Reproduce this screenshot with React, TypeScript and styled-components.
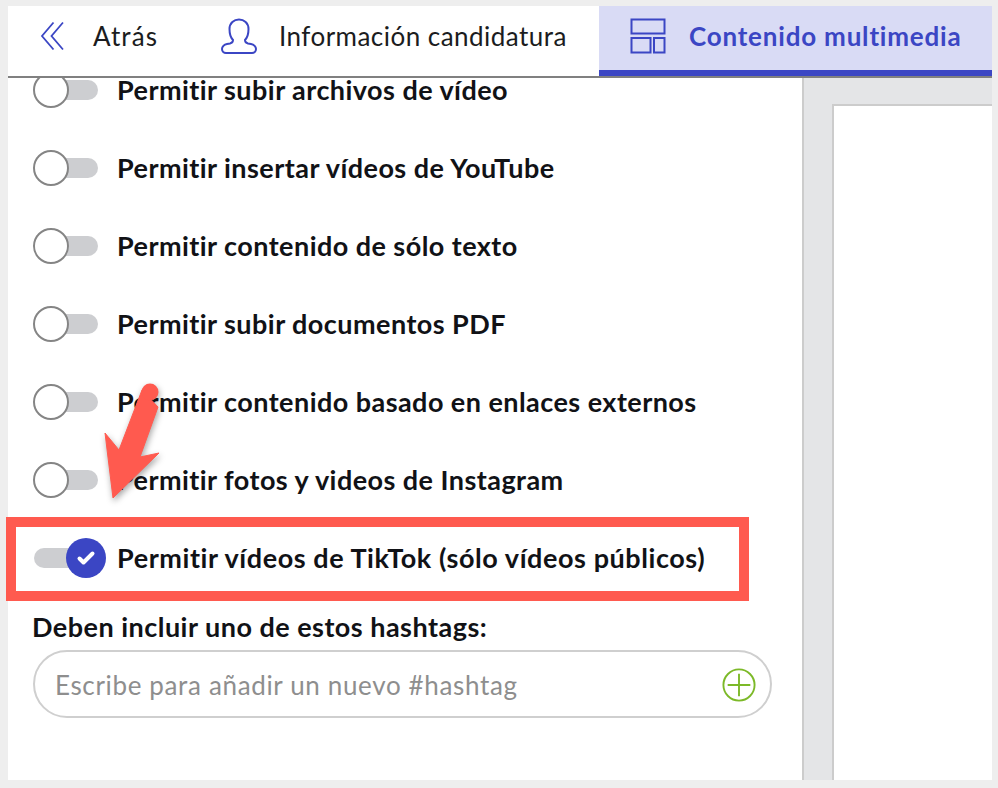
import React from 'react'
import styled, { createGlobalStyle } from 'styled-components'

const BLUE = '#3b46c4'
const CORAL = '#ff5a4f'

const GlobalStyle = createGlobalStyle`
  html, body {
    margin: 0;
    padding: 0;
    background: #eeeeee;
  }
  * {
    box-sizing: border-box;
  }
`

const Page = styled.div`
  position: relative;
  width: 998px;
  height: 788px;
  padding: 6px 6px 8px 8px;
  overflow: hidden;
  font-family: Lato, 'Noto Sans', sans-serif;
  color: #111216;
`

const Frame = styled.div`
  display: flex;
  flex-direction: column;
  height: 100%;
  background: #fff;
`

const TabBar = styled.nav`
  display: flex;
  flex: none;
  height: 72px;
  border-bottom: 2px solid #808080;
`

const Tab = styled.div<{ $active?: boolean; $width: number; $pad: number; $gap: number; $spacing: number }>`
  display: flex;
  align-items: center;
  width: ${({ $width }) => $width}px;
  flex: ${({ $active }) => ($active ? 1 : 'none')};
  height: 70px;
  padding-left: ${({ $pad }) => $pad}px;
  padding-bottom: ${({ $active }) => ($active ? '4px' : '10px')};
  gap: ${({ $gap }) => $gap}px;
  font-size: 26px;
  font-weight: ${({ $active }) => ($active ? 700 : 400)};
  letter-spacing: ${({ $spacing }) => $spacing}px;
  color: ${({ $active }) => ($active ? BLUE : '#1b1c20')};
  background: ${({ $active }) => ($active ? '#d9dbf5' : 'transparent')};
  border-bottom: ${({ $active }) => ($active ? `6px solid ${BLUE}` : 'none')};
`

const Body = styled.div`
  display: flex;
  flex: 1;
  min-height: 0;
`

const Settings = styled.section`
  width: 796px;
  flex: none;
  overflow: hidden;
  border-right: 2px solid #cccccc;
`

const OptionList = styled.ul`
  list-style: none;
  margin: -27px 0 0;
  padding: 0;
`

const Option = styled.li`
  display: flex;
  align-items: center;
  gap: 20px;
  height: 78px;
  padding-left: 25px;
  font-size: 27px;
  font-weight: 700;
  line-height: 22px;
`

const OptionLabel = styled.span<{ $on?: boolean }>`
  letter-spacing: ${({ $on }) => ($on ? '0.57px' : '0.45px')};
`

const Toggle = styled.span`
  position: relative;
  display: block;
  flex: none;
  width: 64px;
  height: 20px;
  margin-left: 1px;
  margin-right: -1px;
  border-radius: 10px;
  background: #cdced1;
`

const Knob = styled.span<{ $on?: boolean }>`
  position: absolute;
  top: ${({ $on }) => ($on ? '-10px' : '-8px')};
  left: ${({ $on }) => ($on ? '32px' : '-1px')};
  display: flex;
  align-items: center;
  justify-content: center;
  width: ${({ $on }) => ($on ? '40px' : '36px')};
  height: ${({ $on }) => ($on ? '40px' : '36px')};
  border-radius: 50%;
  background: ${({ $on }) => ($on ? BLUE : '#fff')};
  border: ${({ $on }) => ($on ? 'none' : '2px solid #858585')};
`

const HashtagBlock = styled.div`
  padding: 15px 30px 0 24px;
`

const HashtagLabel = styled.div`
  font-size: 27px;
  font-weight: 700;
  line-height: 30px;
  letter-spacing: 0.48px;
`

const HashtagField = styled.div`
  display: flex;
  align-items: center;
  height: 68px;
  margin: 8px 0 0 1px;
  padding: 2px 14px 0 20px;
  border: 2px solid #cfcfcf;
  border-radius: 34px;
`

const HashtagInput = styled.input`
  flex: 1;
  min-width: 0;
  border: none;
  outline: none;
  padding: 0;
  font-family: inherit;
  font-size: 26px;
  letter-spacing: 0.65px;
  background: transparent;

  &::placeholder {
    color: #8e8e8e;
    opacity: 1;
  }
`

const PreviewGutter = styled.aside`
  flex: 1;
  padding: 26px 0 0 28px;
  background: #e4e5e7;
`

const PreviewSheet = styled.div`
  height: 100%;
  background: #fff;
  border-top: 2px solid #cccccc;
  border-left: 2px solid #cccccc;
`

const Highlight = styled.div`
  position: absolute;
  left: 6px;
  top: 517px;
  width: 743px;
  height: 84px;
  border: 10px solid ${CORAL};
  pointer-events: none;
`

const Arrow = styled.svg`
  position: absolute;
  left: 90px;
  top: 370px;
  filter: drop-shadow(1px 3px 3px rgba(0, 0, 0, 0.35));
  pointer-events: none;
`

const options = [
  'Permitir subir archivos de vídeo',
  'Permitir insertar vídeos de YouTube',
  'Permitir contenido de sólo texto',
  'Permitir subir documentos PDF',
  'Permitir contenido basado en enlaces externos',
  'Permitir fotos y videos de Instagram',
]

const BackIcon = () => (
  <svg width="24" height="30" viewBox="0 0 24 30" fill="none" stroke={BLUE} strokeWidth="1.8">
    <path d="M13.5 1.500 2 15l11.500 13.500" />
    <path d="M23 1.500 11.500 15 23 28.500" />
  </svg>
)

const PersonIcon = () => (
  <svg width="36" height="36" viewBox="0 0 36 36" fill="none" stroke={BLUE} strokeWidth="2">
    <path d="M12 22C9 19 8.500 15 8.500 11 8.500 5 13 1.500 18 1.500S27.500 5 27.500 11C27.500 15 27 19 24 22 24 24 25 25 27 25.500L30 26C33 26.500 35 29 35 31 35 33.500 33 35 31 35H5C3 35 1 33.500 1 31 1 29 3 26.500 6 26L9 25.500C11 25 12 24 12 22Z" />
  </svg>
)

const LayoutIcon = () => (
  <svg width="36" height="36" viewBox="0 0 36 36" fill="none" stroke={BLUE} strokeWidth="2">
    <rect x="1.500" y="1.500" width="33" height="14" />
    <rect x="1.500" y="20" width="19" height="14.500" />
    <rect x="24" y="20" width="10.500" height="14.500" />
  </svg>
)

const CheckIcon = () => (
  <svg width="20" height="16" viewBox="0 0 20 16" fill="none" stroke="#fff" strokeWidth="4" strokeLinecap="round" strokeLinejoin="round">
    <path d="M3.500 8.500 7.500 12.500 16.500 3.500" />
  </svg>
)

const PlusIcon = () => (
  <svg width="34" height="34" viewBox="0 0 36 36" fill="none" stroke="#7cb928" strokeWidth="2">
    <circle cx="18" cy="18" r="16.500" />
    <path d="M18 6v24M6 18h24" />
  </svg>
)

export default function App() {
  return (
    <Page>
      <GlobalStyle />
      <Frame>
        <TabBar>
          <Tab $width={190} $pad={32} $gap={29} $spacing={1.1}>
            <BackIcon />
            <span>Atrás</span>
          </Tab>
          <Tab $width={401} $pad={23} $gap={22} $spacing={0.47}>
            <PersonIcon />
            <span>Información candidatura</span>
          </Tab>
          <Tab $active $width={393} $pad={31} $gap={23} $spacing={0.8}>
            <LayoutIcon />
            <span>Contenido multimedia</span>
          </Tab>
        </TabBar>
        <Body>
          <Settings>
            <OptionList>
              {options.map((label) => (
                <Option key={label}>
                  <Toggle>
                    <Knob />
                  </Toggle>
                  <OptionLabel>{label}</OptionLabel>
                </Option>
              ))}
              <Option>
                <Toggle>
                  <Knob $on>
                    <CheckIcon />
                  </Knob>
                </Toggle>
                <OptionLabel $on>Permitir vídeos de TikTok (sólo vídeos públicos)</OptionLabel>
              </Option>
            </OptionList>
            <HashtagBlock>
              <HashtagLabel>Deben incluir uno de estos hashtags:</HashtagLabel>
              <HashtagField>
                <HashtagInput placeholder="Escribe para añadir un nuevo #hashtag" readOnly />
                <PlusIcon />
              </HashtagField>
            </HashtagBlock>
          </Settings>
          <PreviewGutter>
            <PreviewSheet />
          </PreviewGutter>
        </Body>
      </Frame>
      <Highlight />
      <Arrow width="80" height="140" viewBox="0 0 80 140">
        <path
          d="M52 20 L68 37 L50 87 L69 83 L23 128 L15 63 L29 80 Z"
          fill={CORAL}
          stroke={CORAL}
          strokeWidth="1"
          strokeLinejoin="round"
        />
        <circle cx="60" cy="22" r="8.500" fill={CORAL} />
      </Arrow>
    </Page>
  )
}
